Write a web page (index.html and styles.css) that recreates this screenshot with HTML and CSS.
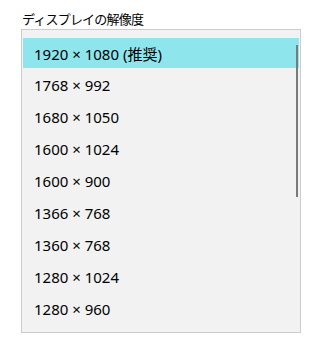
FILE: index.html
```html
<!DOCTYPE html>
<html lang="ja">
<head>
<meta charset="utf-8">
<link rel="stylesheet" href="styles.css">
</head>
<body>
<div class="page">
  <div class="title">ディスプレイの解像度</div>
  <div class="list">
    <div class="item sel">1920 × 1080 (推奨)</div>
    <div class="item">1768 × 992</div>
    <div class="item">1680 × 1050</div>
    <div class="item">1600 × 1024</div>
    <div class="item">1600 × 900</div>
    <div class="item">1366 × 768</div>
    <div class="item">1360 × 768</div>
    <div class="item">1280 × 1024</div>
    <div class="item">1280 × 960</div>
    <div class="thumb"></div>
  </div>
</div>
</body>
</html>
```
FILE: styles.css
```css
html, body {
  margin: 0;
  background: #ffffff;
}
body {
  font-family: "Noto Sans", "Noto Sans CJK JP", sans-serif;
  color: #000;
}
.page {
  padding: 8px 0 0 21px;
}
.title {
  font-family: "Noto Sans CJK JP", sans-serif;
  font-size: 13px;
  letter-spacing: -0.8px;
  line-height: 20px;
  height: 20px;
  padding-top: 1px;
  padding-left: 1px;
}
.list {
  position: relative;
  box-sizing: border-box;
  width: 280px;
  height: 304px;
  border: 1px solid #cccccc;
  background: #f2f2f2;
  padding: 8px 1px 0 1px;
}
.item {
  height: 30px;
  margin-bottom: 2px;
  display: flex;
  align-items: center;
  padding-left: 11px;
  font-size: 15px;
}
.item.sel {
  background: #8fe5ec;
}
.thumb {
  position: absolute;
  right: 2px;
  top: 15px;
  width: 2px;
  height: 152px;
  background: #7a7a7a;
}
```
